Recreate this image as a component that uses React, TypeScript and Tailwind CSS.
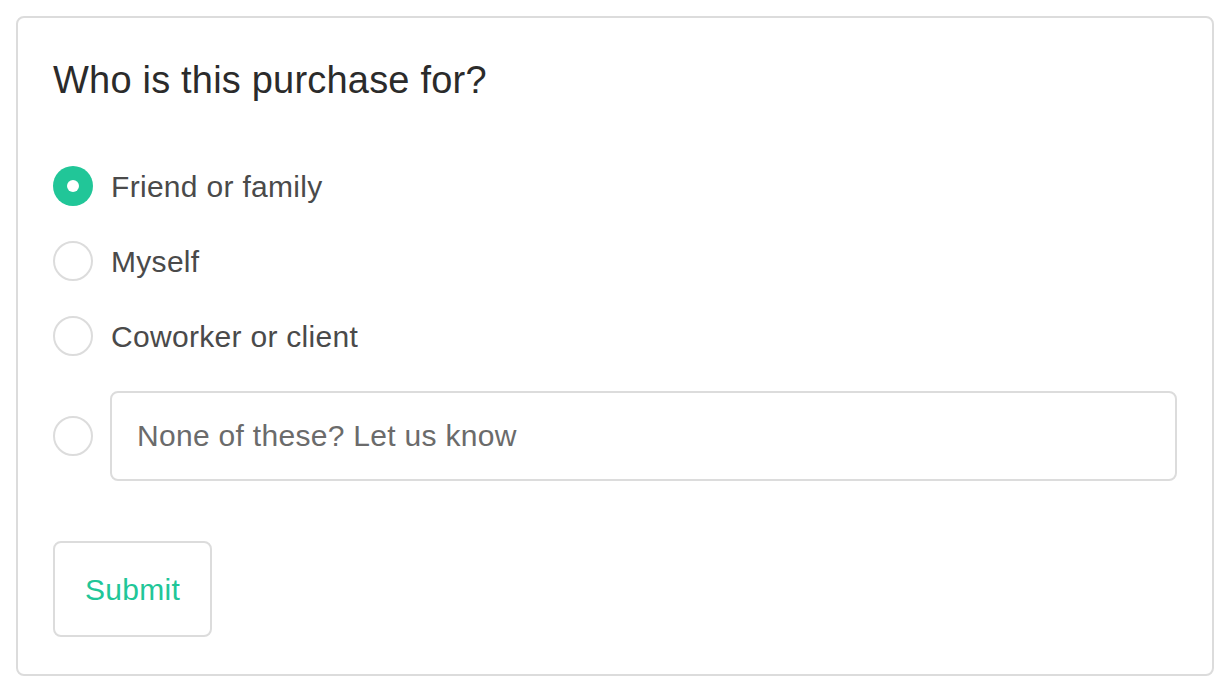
import { useState } from "react";

const options = ["Friend or family", "Myself", "Coworker or client"];

function Radio({ checked }: { checked: boolean }) {
  return checked ? (
    <span className="flex h-10 w-10 shrink-0 items-center justify-center rounded-full bg-[#21c698]">
      <span className="h-3 w-3 rounded-full bg-white" />
    </span>
  ) : (
    <span className="block h-10 w-10 shrink-0 rounded-full border-2 border-[#dcdcdc] bg-white" />
  );
}

export default function App() {
  const [selected, setSelected] = useState(0);

  return (
    <div className="min-h-screen bg-white p-4 font-['Liberation_Sans',Arial,sans-serif]">
      <div className="h-[660px] rounded-lg border-2 border-[#dcdcdc] px-[35px] pt-[40px]">
        <h1 className="text-[38px] leading-[44px] tracking-[0.2px] text-[#2b2b2b]">
          Who is this purchase for?
        </h1>

        <div className="mt-[64px] flex flex-col gap-[35px]">
          {options.map((label, i) => (
            <label
              key={label}
              className="flex h-10 cursor-pointer items-center gap-[18px]"
              onClick={() => setSelected(i)}
            >
              <Radio checked={selected === i} />
              <span className="text-[30px] tracking-[0.3px] text-[#4a4a4a]">{label}</span>
            </label>
          ))}
        </div>

        <div className="mt-[35px] flex items-center gap-[17px]">
          <span onClick={() => setSelected(3)} className="block shrink-0 cursor-pointer">
            <Radio checked={selected === 3} />
          </span>
          <input
            className="h-[90px] min-w-0 flex-1 rounded-lg border-2 border-[#dcdcdc] px-[25px] text-[30px] tracking-[0.3px] text-[#4a4a4a] outline-none placeholder:text-[#6b6b6b]"
            placeholder="None of these? Let us know"
          />
        </div>

        <button className="mt-[60px] h-[96px] w-[159px] rounded-lg border-2 border-[#dcdcdc] text-[30px] tracking-[0.3px] text-[#21c698]">
          Submit
        </button>
      </div>
    </div>
  );
}
